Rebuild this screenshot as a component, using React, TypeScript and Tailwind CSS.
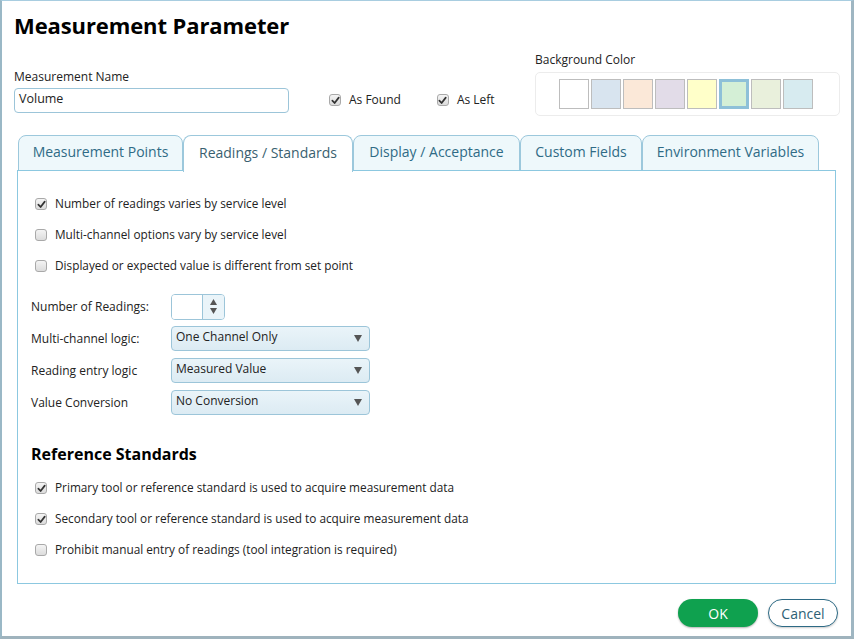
import React from "react";

const font = { fontFamily: '"Open Sans", "Noto Sans", sans-serif' };

function Check({ checked }: { checked?: boolean }) {
  return (
    <span className="inline-flex w-[12px] h-[12px] shrink-0 items-center justify-center rounded-[3px] border border-[#a9a9a9] bg-gradient-to-b from-[#f4f4f4] to-[#dcdcdc]">
      {checked && (
        <svg width="9" height="9" viewBox="0 0 10 10">
          <path d="M1.5 5.2 L4 7.8 L8.6 1.8" fill="none" stroke="#333" strokeWidth="1.9" strokeLinecap="round" strokeLinejoin="round" />
        </svg>
      )}
    </span>
  );
}

function CheckRow({ checked, label }: { checked?: boolean; label: string }) {
  return (
    <div className="flex items-center gap-[8px] h-[16px] text-[11.8px] text-[#222] whitespace-nowrap">
      <Check checked={checked} />
      <span>{label}</span>
    </div>
  );
}

function Select({ value }: { value: string }) {
  return (
    <div className="flex items-center justify-between w-[199px] h-[25px] rounded-[4px] border border-[#9cc5d9] bg-gradient-to-b from-[#eaf4f9] to-[#dcebf3] pl-[4px] pr-[7px] text-[12px] text-[#222]">
      <span className="-mt-[3px]">{value}</span>
      <svg width="8" height="7" viewBox="0 0 8 7">
        <path d="M0 0 H8 L4 7 Z" fill="#555" />
      </svg>
    </div>
  );
}

const tabs = [
  { label: "Measurement Points", w: 165 },
  { label: "Readings / Standards", w: 170, active: true },
  { label: "Display / Acceptance", w: 167 },
  { label: "Custom Fields", w: 122 },
  { label: "Environment Variables", w: 177 },
];

const swatches = ["#ffffff", "#d8e4ef", "#fbe8d8", "#e2dce8", "#ffffc9", "#d4efd6", "#e9f0dc", "#d7ebf0"];

export default function App() {
  return (
    <div style={font} className="w-[854px] h-[639px] bg-white border-t border-t-[#a8cde0] border-l-2 border-l-[#9ab8c6] border-r-[3px] border-r-[#9fb6c2] border-b-[3px] border-b-[#9fb3bd] flex flex-col overflow-hidden">
      <div className="pl-[12px] pr-[11px] pt-[9px]">
        <h1 className="text-[22px] font-bold text-black leading-[30px] tracking-[-0.1px]">Measurement Parameter</h1>
        <div className="flex mt-[13px]">
          <div className="flex flex-col pt-[17px] shrink-0">
            <label className="text-[12px] text-[#222] leading-[16px] -mt-[1px]">Measurement Name</label>
            <div className="mt-[3px] w-[275px] h-[25px] rounded-[4px] border border-[#9cc5d9] px-[4px] flex items-center text-[12.5px] text-[#222]">
              <span className="-mt-[2px]">Volume</span>
            </div>
          </div>
          <div className="flex items-center gap-[8px] ml-[40px] mt-[39px] h-[16px] text-[12px] text-[#222] whitespace-nowrap shrink-0">
            <Check checked />
            <span>As Found</span>
          </div>
          <div className="flex items-center gap-[8px] ml-[36px] mt-[39px] h-[16px] text-[12px] text-[#222] whitespace-nowrap shrink-0">
            <Check checked />
            <span>As Left</span>
          </div>
          <div className="flex flex-col ml-auto shrink-0">
            <label className="text-[12px] text-[#222] leading-[16px] -mt-[1px]">Background Color</label>
            <div className="mt-[4px] w-[305px] h-[44px] rounded-[5px] border border-[#ececec] flex items-center pl-[23px] gap-[2px]">
              {swatches.map((c, i) => (
                <div
                  key={i}
                  className={i === 5 ? "w-[30px] h-[30px] border-[3px] border-[#8ec0d8]" : "w-[30px] h-[30px] border border-[#bdbdbd]"}
                  style={{ backgroundColor: c }}
                />
              ))}
            </div>
          </div>
        </div>
      </div>

      <div className="mx-[15px] mt-[19px] flex flex-col">
        <div className="flex pl-[1px] h-[36px] items-end">
          {tabs.map((t) =>
            t.active ? (
              <div
                key={t.label}
                className="h-[37px] -mb-[1px] rounded-t-[8px] border border-b-0 border-[#9cc8dc] bg-white flex items-center justify-center text-[14px] text-[#3a5f70] relative z-10 pb-[4px]"
                style={{ width: t.w }}
              >
                {t.label}
              </div>
            ) : (
              <div
                key={t.label}
                className="h-[36px] rounded-t-[8px] border border-[#9cc8dc] bg-[#eef8fb] flex items-center justify-center text-[14px] text-[#2f6b86] pb-[3px]"
                style={{ width: t.w }}
              >
                {t.label}
              </div>
            )
          )}
        </div>
        <div className="h-[414px] -mt-[1px] border border-[#8cc8e0] flex flex-col pl-[17px] pt-[25px]">
          <div className="flex flex-col gap-[15px]">
            <CheckRow checked label="Number of readings varies by service level" />
            <CheckRow label="Multi-channel options vary by service level" />
            <CheckRow label="Displayed or expected value is different from set point" />
          </div>
          <div className="mt-[20px] flex flex-col gap-[7px] -ml-[4px] text-[12px] text-[#222]">
            <div className="flex items-center h-[25px]">
              <span className="w-[140px]">Number of Readings:</span>
              <div className="w-[54px] h-[26px] rounded-[4px] border border-[#9cc5d9] flex overflow-hidden">
                <div className="flex-1 bg-white" />
                <div className="w-[22px] border-l border-[#9cc5d9] bg-[#eaf4f9] flex flex-col items-center justify-center gap-[3px]">
                  <svg width="7" height="6" viewBox="0 0 7 6"><path d="M0 6 L3.5 0 L7 6 Z" fill="#555" /></svg>
                  <svg width="7" height="6" viewBox="0 0 7 6"><path d="M0 0 H7 L3.5 6 Z" fill="#555" /></svg>
                </div>
              </div>
            </div>
            <div className="flex items-center h-[25px]">
              <span className="w-[140px]">Multi-channel logic:</span>
              <Select value="One Channel Only" />
            </div>
            <div className="flex items-center h-[25px]">
              <span className="w-[140px]">Reading entry logic</span>
              <Select value="Measured Value" />
            </div>
            <div className="flex items-center h-[25px]">
              <span className="w-[140px]">Value Conversion</span>
              <Select value="No Conversion" />
            </div>
          </div>
          <h2 className="-ml-[4px] mt-[28px] text-[16px] font-bold text-black leading-[22px]">Reference Standards</h2>
          <div className="mt-[15px] flex flex-col gap-[15px]">
            <CheckRow checked label="Primary tool or reference standard is used to acquire measurement data" />
            <CheckRow checked label="Secondary tool or reference standard is used to acquire measurement data" />
            <CheckRow label="Prohibit manual entry of readings (tool integration is required)" />
          </div>
        </div>
      </div>

      <div className="flex justify-end gap-[10px] pr-[13px] mt-[15px]">
        <button className="w-[80px] h-[28px] rounded-full bg-[#0fa14f] text-white text-[14px] shadow-[0_1px_2px_rgba(0,0,0,0.3)]">OK</button>
        <button className="w-[70px] h-[28px] rounded-full border border-[#2d6a85] bg-white text-[#2d5f75] text-[14px] shadow-[0_1px_2px_rgba(0,0,0,0.2)]">Cancel</button>
      </div>
    </div>
  );
}
